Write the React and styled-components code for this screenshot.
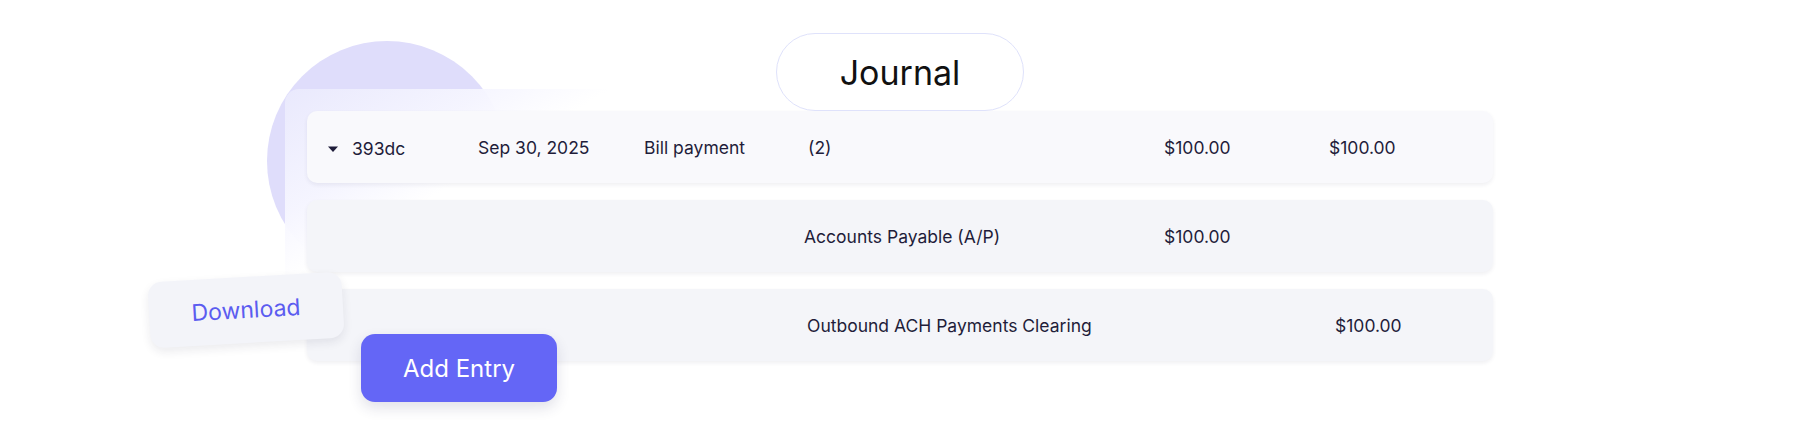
import React from "react";
import styled, { createGlobalStyle } from "styled-components";

const GlobalStyle = createGlobalStyle`
  * { box-sizing: border-box; }
  body {
    margin: 0;
    background: #ffffff;
    font-family: Inter, "Noto Sans", sans-serif;
    color: #1f1d3a;
  }
`;

const entries = [
  {
    id: "393dc",
    date: "Sep 30, 2025",
    memo: "Bill payment",
    account: "(2)",
    accountNudge: 4,
    debit: "$100.00",
    credit: "$100.00",
    header: true,
  },
  {
    account: "Accounts Payable (A/P)",
    debit: "$100.00",
  },
  {
    account: "Outbound ACH Payments Clearing",
    accountNudge: 3,
    credit: "$100.00",
    creditNudge: 6,
  },
];

export default function App() {
  return (
    <>
      <GlobalStyle />
      <Stage>
        <Blob />
        <TitlePill>Journal</TitlePill>
        <Panel>
          {entries.map((e, i) => (
            <Row key={i} $header={e.header}>
              <Cell>
                {e.header && (
                  <IdWrap>
                    <Caret width="10" height="6" viewBox="0 0 10 6">
                      <path d="M0 0.5h10L5 6z" fill="#1f1d3a" />
                    </Caret>
                    {e.id}
                  </IdWrap>
                )}
              </Cell>
              <Cell>{e.date}</Cell>
              <Cell>{e.memo}</Cell>
              <Cell $nudge={e.accountNudge}>{e.account}</Cell>
              <Cell>{e.debit}</Cell>
              <Cell $nudge={e.creditNudge}>{e.credit}</Cell>
            </Row>
          ))}
        </Panel>
        <DownloadCard>Download</DownloadCard>
        <AddButton>Add Entry</AddButton>
      </Stage>
    </>
  );
}

const Stage = styled.div`
  position: relative;
  width: 1800px;
  height: 443px;
  padding: 89px 0 0 285px;
  overflow: hidden;
`;

const Blob = styled.div`
  position: absolute;
  left: 267px;
  top: 41px;
  width: 240px;
  height: 240px;
  border-radius: 50%;
  background: #dfddfb;
`;

const TitlePill = styled.div`
  position: absolute;
  z-index: 3;
  left: 776px;
  top: 33px;
  width: 248px;
  height: 78px;
  display: flex;
  align-items: center;
  justify-content: center;
  border-radius: 39px;
  border: 1.5px solid #dfe2fb;
  background: #ffffff;
  font-size: 34px;
  font-weight: 400;
  color: #111111;
`;

const Panel = styled.div`
  position: relative;
  z-index: 1;
  width: 1230px;
  padding: 22px;
  display: flex;
  flex-direction: column;
  gap: 17px;
  border-radius: 14px;
  background: linear-gradient(
    149deg,
    rgba(236, 236, 253, 0.8) 0%,
    rgba(246, 246, 255, 0.95) 12%,
    #ffffff 19%
  );
`;

const Row = styled.div`
  height: 72px;
  display: grid;
  grid-template-columns: 150px 166px 160px 360px 165px 1fr;
  align-items: center;
  padding-left: 21px;
  border-radius: 10px;
  background: ${(p) => (p.$header ? "#f9f9fc" : "#f4f5f9")};
  box-shadow: 0 2px 4px rgba(30, 30, 70, 0.07);
  font-size: 17.5px;
  color: #1f1d3a;
`;

const Cell = styled.div`
  white-space: nowrap;
  padding-left: ${(p) => p.$nudge || 0}px;
`;

const IdWrap = styled.span`
  display: inline-flex;
  align-items: center;
  gap: 14px;
`;

const Caret = styled.svg`
  display: block;
`;

const DownloadCard = styled.div`
  position: absolute;
  z-index: 4;
  left: 149px;
  top: 277px;
  width: 194px;
  height: 66px;
  display: flex;
  align-items: center;
  justify-content: center;
  border-radius: 14px;
  background: #f3f4f9;
  box-shadow: 0 4px 10px rgba(30, 30, 70, 0.09);
  transform: rotate(-3.3deg);
  font-size: 23px;
  color: #5b5cf0;
`;

const AddButton = styled.button`
  position: absolute;
  z-index: 4;
  left: 361px;
  top: 334px;
  width: 196px;
  height: 68px;
  border: none;
  border-radius: 14px;
  background: #6466f6;
  box-shadow: 0 6px 14px rgba(40, 40, 90, 0.14);
  font-family: Inter, "Noto Sans", sans-serif;
  font-size: 24px;
  color: #ffffff;
  cursor: pointer;
`;
